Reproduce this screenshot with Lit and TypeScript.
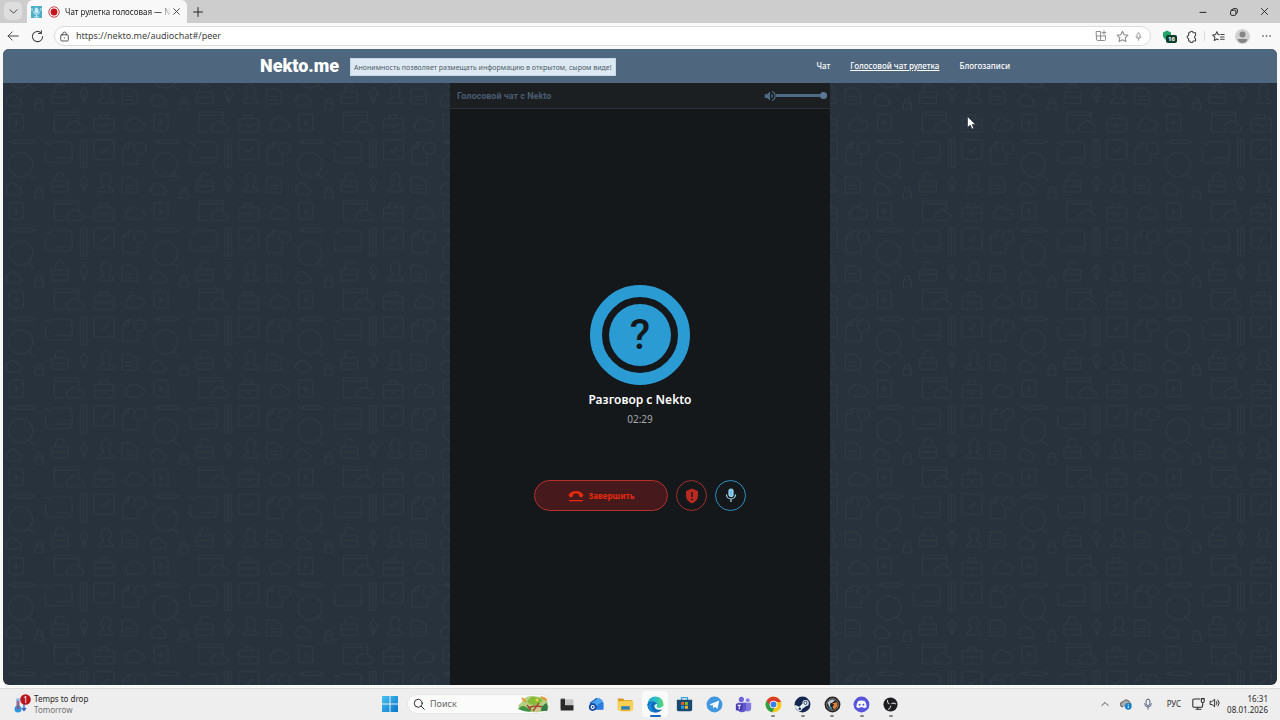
import { LitElement, html, css, svg } from "lit";
import { customElement, state } from "lit/decorators.js";

/* Line icons on a 16-unit grid */
const line = (body: unknown, size = 12, cls = "") =>
  html`<svg class="line ${cls}" width=${size} height=${size} viewBox="0 0 16 16" aria-hidden="true">${body}</svg>`;

const mic = svg`<rect x="5.5" y="1.5" width="5" height="8.5" rx="2.5"/><path d="M3.5 7.5a4.5 4.5 0 0 0 9 0M8 12v3"/>`;

@customElement("browser-chrome")
class BrowserChrome extends LitElement {
  static styles = css`
    :host { display: block; font-family: "Noto Sans", "Open Sans", sans-serif; color: #333; }
    button { border: 0; padding: 0; background: none; color: inherit; font: inherit; display: grid; place-items: center; }
    .line { fill: none; stroke: currentColor; stroke-width: 1.3; stroke-linecap: round; stroke-linejoin: round; display: block; }
    .tabs { height: 23px; background: #cdcdcd; display: flex; align-items: stretch; padding-left: 4px; }
    .menu { width: 18px; height: 18px; margin: 2px 5px 0 0; border-radius: 5px; background: #dedede; }
    .tab { width: 160px; background: #f8f8f8; border-radius: 6px 6px 0 0; display: flex; align-items: center; padding: 0 5px 0 4px; box-sizing: border-box; }
    .tab svg { flex: none; display: block; }
    .fav { margin-right: 6px; }
    .title { flex: 1; min-width: 0; margin: 0 0 0 5px; font-size: 8px; line-height: 12px; white-space: nowrap; color: #222;
      -webkit-mask-image: linear-gradient(90deg, #000 90%, transparent); mask-image: linear-gradient(90deg, #000 90%, transparent); }
    .plus { width: 22px; color: #222; }
    .win { margin-left: auto; display: flex; color: #222; }
    .win button { width: 31px; }
    .bar { height: 26px; background: #f8f8f8; display: flex; align-items: center; padding: 0 7px 0 6px; color: #444; }
    .nav { width: 14px; margin-right: 10px; }
    .address { flex: 1; height: 20px; box-sizing: border-box; border: 1px solid #dcdcdc; border-radius: 10px; background: #fff; display: flex; align-items: center; padding: 0 7px 0 4px; gap: 6px; }
    .address input { flex: 1; min-width: 0; border: 0; outline: 0; padding: 0; background: none; color: #444; font: 9px/14px "Noto Sans", sans-serif; }
    .faint { color: #8a8a8a; display: flex; gap: 9px; align-items: center; }
    .voice { margin-left: -4px; }
    .tools { display: flex; align-items: center; gap: 10px; margin-left: 11px; }
    .ext { position: relative; }
    .count { position: absolute; left: 4px; top: 5px; padding: 0 2px; border-radius: 2px; background: #0b3d2a; color: #fff; font-size: 6px; line-height: 8px; font-weight: 700; }
    .sep { width: 1px; height: 10px; background: #dadada; margin: 0 -3px 0 -4px; }
    .tools svg { display: block; }
  `;
  render() {
    return html`
      <div class="tabs">
        <button class="menu" aria-label="Tab actions">${line(svg`<path d="M3 5.5 8 10.5 13 5.5"/>`, 11)}</button>
        <div class="tab">
          <svg class="fav" width="11" height="12" viewBox="0 0 11 12"><rect width="11" height="12" fill="#4cadc9"/><g fill="none" stroke="#c9edf5"><rect x="4" y="2" width="3" height="5" rx="1.5" fill="#c9edf5"/><path d="M2.5 5.5a3 3 0 0 0 6 0M5.500 8.500V11M3 11h5M1 2v3M10 2v3"/></g></svg>
          <svg width="12" height="12" viewBox="0 0 12 12"><circle cx="6" cy="6" r="5.200" fill="none" stroke="#c4494d"/><circle cx="6" cy="6" r="3.400" fill="#c5161d"/></svg>
          <span class="title">Чат рулетка голосовая — N</span>
          <button aria-label="Close tab">${line(svg`<path d="m4 4 8 8m0-8-8 8"/>`, 11)}</button>
        </div>
        <button class="plus" aria-label="New tab">${line(svg`<path d="M8 2v12M2 8h12"/>`, 12)}</button>
        <div class="win">
          <button aria-label="Minimize">${line(svg`<path d="M4 8.500h8"/>`, 12)}</button>
          <button aria-label="Restore">${line(svg`<rect x="3.500" y="5.500" width="7" height="7" rx="1.500"/><path d="M6 5.500V5a1.500 1.500 0 0 1 1.500-1.500H11A1.500 1.500 0 0 1 12.500 5v3.500A1.500 1.500 0 0 1 11 10"/>`, 12)}</button>
          <button aria-label="Close">${line(svg`<path d="m3.500 3.500 9 9m0-9-9 9"/>`, 11)}</button>
        </div>
      </div>
      <div class="bar">
        <button class="nav" aria-label="Back">${line(svg`<path d="M15 8H1.500M7 2.500 1.500 8 7 13.500"/>`, 12)}</button>
        <button class="nav" aria-label="Reload">${line(svg`<path d="M14.300 8a6.300 6.300 0 1 1-2-4.600M12.800.8v3.400H9.200"/>`, 13)}</button>
        <div class="address">
          ${line(svg`<rect x="2.500" y="5.500" width="11" height="9" rx="1.500"/><path d="M5.500 5.500V4a2.500 2.500 0 0 1 5 0v1.500M8 10v.3"/>`, 11)}
          <input aria-label="Address" value="https://nekto.me/audiochat#/peer" />
          <div class="faint">
            ${line(svg`<path d="M2 2h5.500v12H3.500A1.500 1.500 0 0 1 2 12.500zM2 8h12M7.500 14h5a1.500 1.500 0 0 0 1.500-1.500V8M12 1v5M9.500 3.500h5"/>`, 12)}
            ${line(svg`<path d="m8 1.500 2 4.300 4.700.6-3.400 3.200.9 4.700L8 12l-4.200 2.300.9-4.700L1.300 6.400 6 5.800z"/>`, 13)}
            ${line(mic, 9, "voice")}
          </div>
        </div>
        <div class="tools">
          <div class="ext"><svg width="13" height="12" viewBox="0 0 13 12"><path d="M1 2.500 5 .5l4 2v4Q8 9 5 10.500 2 9 1 6.500z" fill="#21a36b"/></svg><span class="count">16</span></div>
          ${line(svg`<path d="M4.500 3.500H6a2 2 0 0 1 4 0h3V7a1.800 1.800 0 0 0 0 3.500v3h-3a2 2 0 0 1-4 0H4.500v-3a2 2 0 0 1-1.500-3l1.500-1z"/>`, 13)}
          <span class="sep"></span>
          ${line(svg`<path d="M9 5.700 7.500 5.500 6 2 4.400 5.700.8 6.200l2.700 2.700-.7 4L6 11l1.800 1M10.500 8.500H15M10.500 11.500H15M11 5.500h4"/>`, 13)}
          <svg width="15" height="15" viewBox="0 0 15 15"><circle cx="7.500" cy="7.500" r="7.500" fill="#d2d2d2"/><circle cx="7.500" cy="5.500" r="3" fill="#858585"/><path d="M2.500 10h10q-1 4-5 4t-5-4" fill="#858585"/></svg>
          <svg width="13" height="12" viewBox="0 0 13 12" fill="#333"><circle cx="3" cy="6" r=".8"/><circle cx="6.500" cy="6" r=".8"/><circle cx="10" cy="6" r=".8"/></svg>
        </div>
      </div>`;
  }
}

@customElement("nekto-page")
class NektoPage extends LitElement {
  static styles = css`
    :host { display: flex; flex-direction: column; overflow: hidden; border-radius: 6px; background: #28323c; font-family: "Noto Sans", "Open Sans", sans-serif; }
    header { background: #4f677e; height: 34px; display: flex; justify-content: center; }
    .inner { width: 760px; display: flex; align-items: center; }
    .logo { font: 900 18px/24px Roboto, sans-serif; color: #fff; text-decoration: none; margin-right: 11px; }
    .note { background: #dce9f3; border: 1px solid #c6d9e8; box-sizing: border-box; height: 18px; padding: 0 3px; font-size: 7px; line-height: 17px; color: #4f5b66; white-space: nowrap; margin-top: 2px; }
    nav { margin-left: auto; margin-right: 10px; display: flex; gap: 20px; }
    nav a { color: #fff; text-decoration: none; font-size: 8px; line-height: 14px; font-weight: 500; white-space: nowrap; }
    nav a.on { text-decoration: underline; }
    .body { flex: 1; display: grid; justify-content: center; grid-template-columns: 380px; position: relative; }
    .wall { position: absolute; inset: 0; width: 100%; height: 100%; }
    .panel { position: relative; background: #14181b; display: flex; flex-direction: column; }
    .top { height: 25px; background: #1b1f22; border-bottom: 1px solid #2b3136; display: flex; align-items: center; padding: 0 3px 0 7px; color: #4a5c70; }
    h1 { margin: 0 auto 0 0; font: 700 9px/14px Roboto, sans-serif; }
    .top svg { display: block; }
    input { appearance: none; width: 51px; height: 8px; margin: 0; background: linear-gradient(#4f6a84, #4f6a84) center / 100% 3px no-repeat; }
    input::-webkit-slider-thumb { appearance: none; width: 7px; height: 7px; border-radius: 50%; background: #5a7896; }
    .call { flex: 1; display: flex; flex-direction: column; align-items: center; justify-content: center; padding-top: 2px; }
    .avatar { width: 76px; height: 76px; border: 12px solid #2a9bd3; border-radius: 50%; display: grid; place-items: center; }
    .face { width: 62px; height: 62px; border-radius: 50%; background: #2a9bd3; color: #14181b; display: grid; place-items: center; font: 500 42px/62px Roboto, sans-serif; }
    h2 { margin: 6px 0 0; font-size: 12px; line-height: 18px; font-weight: 600; color: #fff; }
    .time { font-size: 10px; line-height: 16px; margin-top: 2px; color: #a5a8aa; }
    .actions { display: flex; gap: 8px; margin-top: 53px; }
    button { height: 31px; width: 31px; box-sizing: border-box; border-radius: 16px; padding: 0; background: none; display: flex; align-items: center; justify-content: center; }
    .end { width: 134px; border: 1px solid #b5302b; background: #461a1d; color: #e52a0d; gap: 5px; font: 700 8px/12px "Noto Sans", sans-serif; }
    .report { border: 1px solid #a32f2c; }
    .mute { border: 1px solid #2d8fc0; }
  `;

  @state() volume = 100;

  private setVolume(e: Event) {
    this.volume = Number((e.target as HTMLInputElement).value);
  }

  render() {
    return html`
      <header>
        <div class="inner">
          <a class="logo" href="#">Nekto.me</a>
          <span class="note">Анонимность позволяет размещать информацию в открытом, сыром виде!</span>
          <nav><a href="#chat">Чат</a><a class="on" href="#audio">Голосовой чат рулетка</a><a href="#blog">Блогозаписи</a></nav>
        </div>
      </header>
      <div class="body">
        <svg class="wall" aria-hidden="true">
          <defs>
            <pattern id="tile" width="434" height="266" patternUnits="userSpaceOnUse" patternTransform="translate(0 27) scale(.33333)">
              <g transform="translate(-9 0)" fill="none" stroke="#303a44" stroke-width="3" stroke-linejoin="round">
                <rect x="28" y="13" width="42" height="49" rx="3"/><path d="M40 38h18m-9-9v18"/>
                <path d="M196 66h-33V6h72v28M163 16h72M207 66a14 14 0 0 1 4-26 16 16 0 0 1 28 4 11 11 0 0 1 2 22z"/>
                <rect x="282" y="26" width="60" height="40" rx="5"/><path d="M300 26V14h22v12M282 44h60M306 50h12"/>
                <path d="M384 62a15 15 0 0 1 0-26 18 18 0 0 1 32-4 15 15 0 0 1 4 30z"/>
                <path d="M27 95l16-5h50q12 5 12 5t-12 5H43zM43 90v10"/>
                <circle cx="62" cy="164" r="36"/><path d="m84 192 21 16"/>
                <path d="M150 96h54q12 0 12 12v38q0 12-12 12h-54q-14 0-14-14v-26M134 98l20 8M165 144h48"/>
                <path d="M241 88h19v84h-19zM250 88v84"/>
                <rect x="282" y="89" width="60" height="60" rx="4"/><path d="m302 120 8 8 15-18"/>
                <path d="M414 136v26h-46v-48l17-17h16M370 114h16V97"/><circle cx="420" cy="115" r="18"/>
                <path d="M29 254a15 15 0 0 1-5-26 15 15 0 0 1 28 2 13 13 0 0 1 6 24z"/>
                <path d="M106 245h24v20h-24zM110 245v-6a8 8 0 0 1 16 0v6"/>
                <rect x="155" y="212" width="50" height="34" rx="3"/><path d="M166 212v-10a14 14 0 0 1 27-4M158 228h44"/>
                <path d="M252 197l12 20-12 28-12-28zM252 216v28"/>
                <path d="M296 246v-8l16-10q-10-8-8-22 3-16 14-16t14 16q2 14-8 22l16 10v8z"/>
                <path d="M366 201h30l15 14v33h-45zM376 226h24M376 236h24"/>
              </g>
            </pattern>
          </defs>
          <rect width="100%" height="100%" fill="url(#tile)"/>
        </svg>
        <main class="panel">
          <div class="top">
            <h1>Голосовой чат с Nekto</h1>
            <svg width="12" height="12" viewBox="0 0 16 16" fill="none" stroke="#4f6a84" stroke-width="1.600"><path d="M1 5.500h3L8 2v12l-4-3.500H1z" fill="#4f6a84" stroke="none"/><path d="M9.800 5.500a3.500 3.500 0 0 1 0 5M10.500 2a6.300 6.300 0 0 1 0 12"/></svg>
            <input type="range" aria-label="Громкость" min="0" max="100" .value=${String(this.volume)} @input=${this.setVolume} />
          </div>
          <div class="call">
            <div class="avatar"><div class="face">?</div></div>
            <h2>Разговор с Nekto</h2>
            <div class="time">02:29</div>
            <div class="actions">
              <button class="end"><svg width="16" height="12" viewBox="0 0 16 12" fill="#e52a0d"><path d="M8 1C4.500 1 2 2.500.700 4.800q-.3.600.2 1.100l1.300 1.300q.5.400 1 .1l1.600-1q.4-.3.4-.8V4Q8 3.200 10.800 4v1.500q0 .5.4.8l1.600 1q.5.300 1-.1l1.300-1.300q.5-.5.2-1.100C14 2.500 11.500 1 8 1M1 10h14v1.200H1z"/></svg>Завершить</button>
              <button class="report" aria-label="Пожаловаться"><svg width="14" height="16" viewBox="0 0 14 16"><path d="M7 .5 13 3v5q0 5-6 7.500Q1 13 1 8V3z" fill="#b92a20"/><path d="M7 4v5M7 10.500v1.700" stroke="#14181b" stroke-width="1.400"/></svg></button>
              <button class="mute" aria-label="Микрофон"><svg width="12" height="15" viewBox="0 0 12 15" fill="none" stroke="#a6dcf5" stroke-width="1.200"><rect x="4" y="1" width="4" height="7.500" rx="2" fill="#6fc0e8"/><path d="M1.500 6.500a4.500 4.500 0 0 0 9 0M6 11v3"/></svg></button>
            </div>
          </div>
        </main>
      </div>`;
  }
}

const apps: { name: string; art: unknown; mark?: string }[] = [
  { name: "Task view", art: svg`<path d="M2 3h5v12H2z" fill="#555"/><path d="M7 4h10v9H7z" fill="#c3c3c3"/><path d="M2 4h5v7h10v6H2z" fill="#292929"/>` },
  { name: "Outlook", art: svg`<path d="m2 8 8-6 8 6v8H4z" fill="#2360c5"/><path d="m4 8 9-6 5 4-11 9z" fill="#49a3ef"/><path d="m7 13 11-6v9H8z" fill="#2b7ce0"/><circle cx="5.500" cy="13" r="4.500" fill="#174a9c"/><circle cx="5.500" cy="13" r="1.800" fill="none" stroke="#fff" stroke-width="1.300"/>` },
  { name: "Explorer", art: svg`<path d="M1 3h6l2 2h9v11H1z" fill="#d99a1c"/><path d="M1 6h18v11H1z" fill="#fbd053"/><path d="M5 12h10v5H5z" fill="#2a81b9"/><path d="M4 16h12v2H4z" fill="#f0b938"/>` },
  { name: "Edge", mark: "active", art: svg`<defs><linearGradient id="e1" x2="1"><stop stop-color="#1e9fd8"/><stop offset=".55" stop-color="#2fc0c6"/><stop offset="1" stop-color="#5bd96b"/></linearGradient></defs><circle cx="10" cy="10" r="9.500" fill="url(#e1)"/><path d="M.5 10.500Q1.500 6.500 6 6.500q4.500 0 5.500 3-3.500 0-3 3 1 4 6 3.500 2-.2 3.500-1Q15.500 19.500 10 19.500 1 19 .5 10.500" fill="#1668bd"/><path d="M6.500 7q-4 5 0 10 3 2.500 5 2.400Q3 19.500 1.500 13 1.500 8 6.500 7" fill="#1b8fe0"/><path d="M11.500 9.500q.8 1.300-.2 2.500-.5 1.800 2.700 2 3.500 0 5.300-2.500l1 1.500-2.500 2.500q-3.500 1.500-6.800-.2-2.500-1.800-2-4 .7-1.600 2.500-1.800" fill="#f4fafa"/>` },
  { name: "Store", art: svg`<path d="M6.500 5V2h7v3" fill="none" stroke="#3aa5dd" stroke-width="1.500"/><path d="M1 4.500h18V16q0 2-2 2H3q-2 0-2-2z" fill="#174a73"/><path d="M6 7h3.500v3.500H6z" fill="#f0562b"/><path d="M10.500 7H14v3.500h-3.500z" fill="#87bd23"/><path d="M6 11.500h3.500V15H6z" fill="#22a5ee"/><path d="M10.500 11.500H14V15h-3.500z" fill="#fdba20"/>` },
  { name: "Telegram", art: svg`<circle cx="10" cy="10" r="9.300" fill="#3f97df"/><path d="m4 10 11.500-4.600-2 9.600-3.300-2.400-1.700 1.700-.5-3.300L13 7.500 7 11.200z" fill="#fff"/>` },
  { name: "Teams", art: svg`<circle cx="7.500" cy="4" r="3" fill="#6d62d9"/><circle cx="15" cy="5" r="2.300" fill="#8a7fe8"/><path d="M10 8h9v6q0 4-4 4h-5z" fill="#8377e0"/><path d="M3 8h10v6q0 5-5 5t-5-5z" fill="#6256cf"/><path d="M1 9h8v8H1z" fill="#4a3db3"/><path d="M3 11h4M5 11v4.500" stroke="#fff" stroke-width="1.200"/>` },
  { name: "Chrome", mark: "open", art: svg`<circle cx="10" cy="10" r="9.300" fill="#f8c81c"/><path d="M2 5.300a9.300 9.300 0 0 1 16 0L19 7h-9L5.500 11z" fill="#dc3b2e"/><path d="M2 5.300 6.500 12l4.500 2-2.500 5.200A9.300 9.300 0 0 1 2 5.300" fill="#2f9e4b"/><circle cx="10" cy="10" r="4.500" fill="#fff"/><circle cx="10" cy="10" r="3.500" fill="#3d7ee8"/>` },
  { name: "Steam", mark: "open", art: svg`<circle cx="10" cy="10" r="9.300" fill="#142850"/><path d="m1 10.500 5.500 2.200 3.500-4a3.700 3.700 0 1 1 4 3.300l-4.500 3.300a3 3 0 0 1-5.600 1L1.500 14z" fill="#e8eef5"/><circle cx="13.500" cy="8" r="2.300" fill="#142850"/><circle cx="13.500" cy="8" r="1.400" fill="#e8eef5"/><circle cx="6.800" cy="15" r="1.400" fill="#142850"/>` },
  { name: "Game", mark: "open", art: svg`<circle cx="10" cy="10" r="9.300" fill="#262525"/><circle cx="10" cy="10" r="7" fill="none" stroke="#8b8378" stroke-width="1"/><path d="M4 8q4-6 9-3l-5 4-1 5z" fill="#b9cbd4"/><path d="m9 9 6-2 1 5-4 4-2-3z" fill="#df7f37"/><path d="m5 12 4 1 1 3q-4 0-5-4" fill="#33839c"/><path d="m8 8 4 2-2 3-3-2z" fill="#262525"/>` },
  { name: "Discord", mark: "open", art: svg`<circle cx="10" cy="10" r="9.300" fill="#5655dc"/><path d="M6 6q4-1.300 8 0 2 3.500 2 7-1.500 1.300-3.200 1.500L12 13.300H8l-.8 1.200Q5.500 14.300 4 13q0-3.500 2-7" fill="#fff"/><circle cx="7.800" cy="10.300" r="1.300" fill="#5655dc"/><circle cx="12.200" cy="10.300" r="1.300" fill="#5655dc"/>` },
  { name: "OBS", mark: "open", art: svg`<circle cx="10" cy="10" r="8.300" fill="#1d1d1f"/><path d="M10 10Q6 9 6.500 4.500M10 10q3-3 6.500-.5M10 10q1 4-3 6" fill="none" stroke="#c9c9c9" stroke-width="1.300"/><circle cx="10" cy="10" r="1.500" fill="#1d1d1f"/>` },
];

@customElement("task-bar")
class TaskBar extends LitElement {
  static styles = css`
    :host { display: grid; grid-template-columns: 1fr 528px 1fr; align-items: center; height: 32px; box-sizing: border-box; border-top: 1px solid #dcdcdc; padding-bottom: 2px; background: #eeeeee; font-family: "Noto Sans", "Open Sans", sans-serif; color: #2a2a2a; }
    svg { display: block; flex: none; }
    button { border: 0; padding: 0; background: none; color: inherit; font: inherit; }
    .line { fill: none; stroke: currentColor; stroke-width: 1.3; stroke-linecap: round; stroke-linejoin: round; }
    .weather { display: flex; align-items: center; gap: 2px; padding-left: 13px; font-size: 8px; line-height: 11px; }
    .muted { color: #707070; }
    .temp { text-align: left; }
    .center { display: flex; align-items: center; padding-left: 5px; }
    .search { width: 144px; height: 20px; margin: 0 3px 0 8px; box-sizing: border-box; border-radius: 10px; background: #fbfbfb; border: 1px solid #e6e6e6; display: flex; align-items: center; padding: 0 1px 0 5px; gap: 5px; }
    .search input { flex: 1; min-width: 0; border: 0; padding: 0; outline: 0; background: none; font: 9px/14px "Noto Sans", sans-serif; }
    .search input::placeholder { color: #666; }
    .apps { flex: 1; display: flex; justify-content: space-between; }
    .app { width: 26px; height: 26px; border-radius: 4px; display: flex; flex-direction: column; align-items: center; justify-content: flex-end; gap: 2px; }
    .app.active { background: #fafafa; }
    .mark { width: 4px; height: 2px; border-radius: 1px; background: transparent; }
    .open .mark { background: #858585; }
    .active .mark { width: 11px; background: #1769bd; }
    .tray { display: flex; align-items: center; justify-content: flex-end; padding-right: 12px; font-size: 8px; line-height: 11px; gap: 10px; }
    .lang { margin: 0 1px 0 3px; }
    .pair { display: flex; gap: 4px; }
    .clock { text-align: right; margin-left: -4px; }
  `;
  render() {
    return html`
      <button class="weather">
        <svg width="19" height="20" viewBox="0 0 19 20"><rect x="3" y="4" width="4" height="12" rx="2" fill="#8fb9e6"/><circle cx="5" cy="15" r="3.500" fill="#3295dc"/><path d="M5 7v8" stroke="#c9394b" stroke-width="1.500"/><path d="M11 9v7m-2-2 2 2.500 2-2.500" fill="none" stroke="#3c62be" stroke-width="1.300"/><circle cx="12.500" cy="5.500" r="5.300" fill="#b9151c"/><text x="12.500" y="8.500" font-size="8" text-anchor="middle" fill="#fff">1</text></svg>
        <span class="temp">Temps to drop<br /><span class="muted">Tomorrow</span></span>
      </button>
      <div class="center">
        <button aria-label="Start"><svg width="18" height="18" viewBox="0 0 18 18"><defs><linearGradient id="w" x2="1" y2="1"><stop stop-color="#47c2f3"/><stop offset="1" stop-color="#0875ca"/></linearGradient></defs><path d="M1 1h7.500v7.500H1zM9.500 1H17v7.500H9.500zM1 9.500h7.500V17H1zM9.500 9.500H17V17H9.500z" fill="url(#w)"/></svg></button>
        <label class="search">
          <svg class="line" width="12" height="12" viewBox="0 0 16 16"><circle cx="7" cy="7" r="5.300"/><path d="m11 11 4 4"/></svg>
          <input type="text" aria-label="Поиск" placeholder="Поиск" />
          <svg width="32" height="18" viewBox="0 0 32 18"><path d="M4 8Q8 0 16 1t12 1q5 6 3 12-6 4-15 3T2 13q-2-3 2-5" fill="#b5d083"/><path d="M10 7q3-6 8-5t8 3q-3 5-8 5t-8-3" fill="#85bd3a"/><path d="M1 14q4-5 8-2t6 4q-5 2-14-2" fill="#3f9443"/><path d="M11 13q8-4 18 0M16 16 22 8m-8 7-4-5" fill="none" stroke="#a4472d" stroke-width="1.400"/><path d="M24 16q0-5 5-8 3 4 1 8z" fill="#357e48"/><path d="m5 3 4 4m15-5 6 3" stroke="#e39a3b" stroke-width="2"/><circle cx="20" cy="5" r="1.500" fill="#edcf4b"/><path d="M18 15q2-3 5-2l-1 3z" fill="#ecb4a0"/></svg>
        </label>
        <div class="apps">
          ${apps.map((a) => html`<button class="app ${a.mark ?? ""}" aria-label=${a.name}><svg width="17" height="17" viewBox="0 0 20 20">${a.art}</svg><span class="mark"></span></button>`)}
        </div>
      </div>
      <div class="tray">
        <svg class="line" width="10" height="10" viewBox="0 0 16 16"><path d="m3 10.500 5-5 5 5"/></svg>
        <svg width="12" height="12" viewBox="0 0 16 16"><path d="M4 12a3.500 3.500 0 0 1 0-7 5 5 0 0 1 9 1q2 1 2 3" fill="#aaa" stroke="#555" stroke-width="1.300"/><circle cx="11" cy="11" r="4.500" fill="#117fce"/><path d="M11 10.500v3M11 8v1" stroke="#fff" stroke-width="1.300"/></svg>
        <svg class="line" width="12" height="12" viewBox="0 0 16 16" color="#5c6384">${mic}</svg>
        <span class="lang">РУС</span>
        <span class="pair">
          <svg class="line" width="13" height="13" viewBox="0 0 16 16"><path d="M9.500 2.500h-7A1.500 1.500 0 0 0 1 4v7a1.500 1.500 0 0 0 1.500 1.500h9A1.500 1.500 0 0 0 13 11V9.500M5 15h6M7 12.500V15M11.500 2h3.500v3.500q0 1-1.800 1.500-1.700-.5-1.700-1.500zM13.200 7v2.500"/></svg>
          <svg class="line" width="12" height="12" viewBox="0 0 16 16"><path d="M1.500 6v4H4l3.500 3V3L4 6zM10 6a3 3 0 0 1 0 4M12 4a6 6 0 0 1 0 8"/></svg>
        </span>
        <span class="clock">16:31<br />08.01.2026</span>
      </div>`;
  }
}

@customElement("app-root")
class AppRoot extends LitElement {
  static styles = css`
    :host { display: flex; flex-direction: column; min-height: 100vh; background: #f8f8f8; position: relative; }
    nekto-page { flex: 1; margin: 0 3px 3px; }
    .pointer { position: absolute; left: 967px; top: 116px; }
  `;
  render() {
    return html`
      <browser-chrome></browser-chrome>
      <nekto-page></nekto-page>
      <task-bar></task-bar>
      <svg class="pointer" width="9" height="14" viewBox="0 0 9 14" aria-hidden="true"><path d="M.5.500v11l2.700-2.400 1.800 4 1.800-.8L5.100 8.400h3.400z" fill="#fff" stroke="#1b222a" stroke-width=".6"/></svg>`;
  }
}
